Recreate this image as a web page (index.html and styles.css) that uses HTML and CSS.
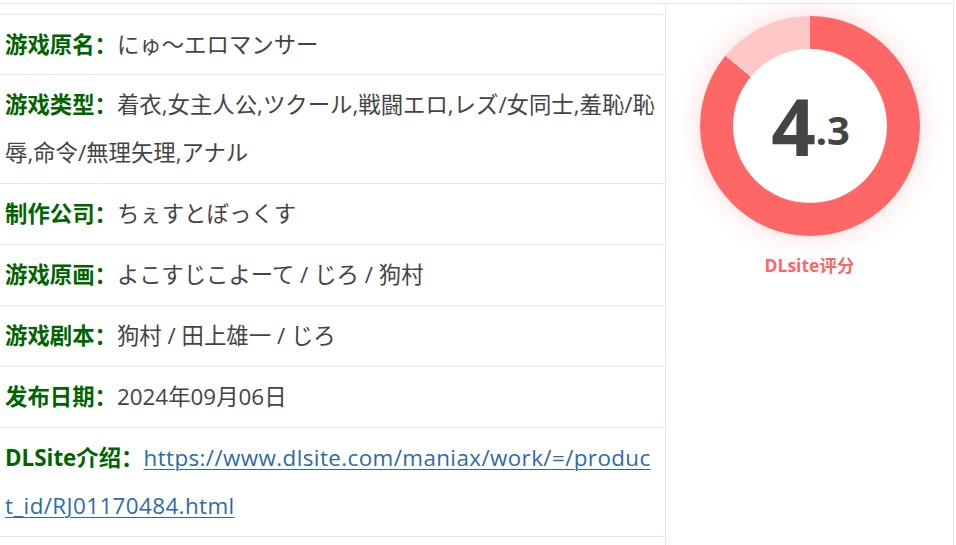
FILE: index.html
```html
<!DOCTYPE html>
<html lang="zh-CN">
<head>
<meta charset="utf-8">
<link rel="stylesheet" href="styles.css">
</head>
<body>
<div class="wrap">
  <div class="info">
    <div class="rows">
      <div class="row first"><span class="label">游戏原名：</span><span class="value">にゅ～エロマンサー</span></div>
      <div class="row"><span class="label">游戏类型：</span><span class="value">着衣,女主人公,ツクール,戦闘エロ,レズ/女同士,羞恥/恥辱,命令/無理矢理,アナル</span></div>
      <div class="row"><span class="label">制作公司：</span><span class="value">ちぇすとぼっくす</span></div>
      <div class="row"><span class="label">游戏原画：</span><span class="value">よこすじこよーて / じろ / 狗村</span></div>
      <div class="row"><span class="label">游戏剧本：</span><span class="value">狗村 / 田上雄一 / じろ</span></div>
      <div class="row"><span class="label">发布日期：</span><span class="value">2024年09月06日</span></div>
      <div class="row"><span class="label">DLSite介绍：</span><a class="link" href="#">https://www.dlsite.com/maniax/work/=/product_id/RJ01170484.html</a></div>
    </div>
  </div>
  <div class="score">
    <div class="donut">
      <div class="hole">
        <span class="big">4</span><span class="small">.3</span>
      </div>
    </div>
    <div class="score-label">DLsite评分</div>
  </div>
</div>
</body>
</html>
```
FILE: styles.css
```css
html, body {
  margin: 0;
  padding: 0;
  background: #fff;
}
body {
  font-family: "Open Sans", "Noto Sans CJK SC", sans-serif;
  color: #444;
  overflow: hidden;
}
.wrap {
  margin-top: 3px;
  width: 953px;
  display: flex;
  border-top: 1px solid #dfe9f3;
  border-right: 1px solid #dfe9f3;
  height: 560px;
}
.info {
  width: 666px;
  flex: none;
  border-right: 1px solid #dfe9f3;
  padding-top: 10px;
  box-sizing: border-box;
}
.rows {
  border-top: 1px solid #dfe9f3;
}
.row {
  padding: 6px 8px 6px 5px;
  border-bottom: 1px solid #dfe9f3;
  font-size: 22.4px;
  line-height: 48px;
  word-break: break-all;
}
.row.first {
  padding-bottom: 5px;
}
.label {
  color: #006400;
  font-weight: bold;
}
.value {
  color: #444;
}
.link {
  color: #2f6aa8;
  text-decoration: underline;
  text-underline-offset: 3px;
  text-decoration-thickness: 1px;
  letter-spacing: 0.4px;
}
.score {
  flex: 1;
  display: flex;
  flex-direction: column;
  align-items: center;
  padding-top: 12px;
}
.donut {
  width: 220px;
  height: 220px;
  border-radius: 50%;
  background: conic-gradient(#ff6666 0deg 309.6deg, #ffc8c8 309.6deg 360deg);
  box-shadow: 0 0 26px rgba(255, 102, 102, 0.25);
  display: flex;
  align-items: center;
  justify-content: center;
}
.hole {
  width: 154px;
  height: 154px;
  border-radius: 50%;
  background: #fff;
  display: flex;
  align-items: center;
  justify-content: center;
  color: #444;
  font-family: "Noto Sans", "Open Sans", sans-serif;
  font-weight: bold;
  padding-left: 2px;
  box-sizing: border-box;
}
.big {
  font-size: 78px;
  line-height: 1;
}
.small {
  font-size: 40px;
  line-height: 1;
  margin-top: 8px;
}
.score-label {
  margin-top: 16px;
  color: #ff6666;
  font-family: "Open Sans", "Noto Sans CJK SC", sans-serif;
  font-weight: bold;
  font-size: 17.5px;
}
```
